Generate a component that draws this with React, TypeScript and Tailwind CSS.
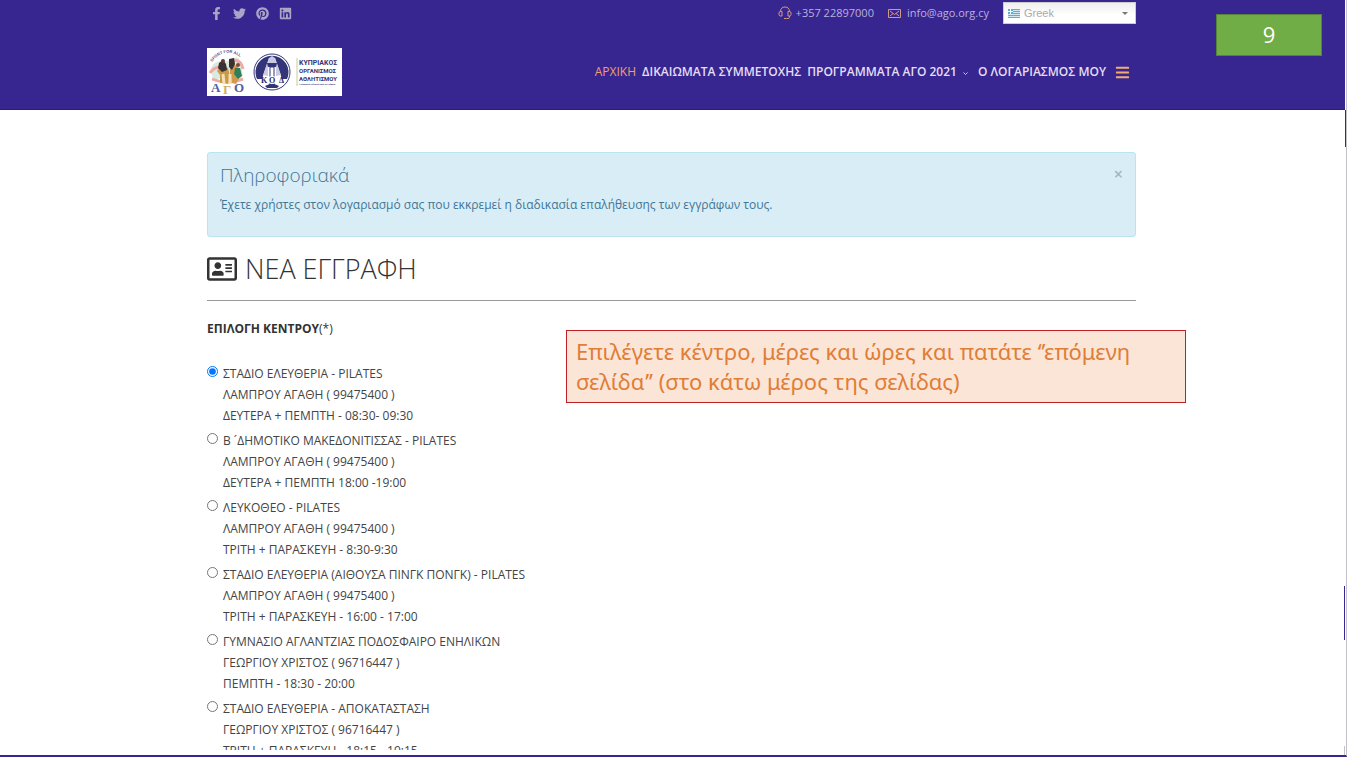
import { useState } from 'react'
import { FaBars, FaFacebookF, FaLinkedin, FaPinterest, FaRegAddressCard, FaTwitter } from 'react-icons/fa'

const centers = [
  { name: 'ΣΤΑΔΙΟ ΕΛΕΥΘΕΡΙΑ - PILATES', trainer: 'ΛΑΜΠΡΟΥ ΑΓΑΘΗ ( 99475400 )', hours: 'ΔΕΥΤΕΡΑ + ΠΕΜΠΤΗ - 08:30- 09:30' },
  { name: 'Β ´ΔΗΜΟΤΙΚΟ ΜΑΚΕΔΟΝΙΤΙΣΣΑΣ - PILATES', trainer: 'ΛΑΜΠΡΟΥ ΑΓΑΘΗ ( 99475400 )', hours: 'ΔΕΥΤΕΡΑ + ΠΕΜΠΤΗ 18:00 -19:00' },
  { name: 'ΛΕΥΚΟΘΕΟ - PILATES', trainer: 'ΛΑΜΠΡΟΥ ΑΓΑΘΗ ( 99475400 )', hours: 'ΤΡΙΤΗ + ΠΑΡΑΣΚΕΥΗ - 8:30-9:30' },
  { name: 'ΣΤΑΔΙΟ ΕΛΕΥΘΕΡΙΑ (ΑΙΘΟΥΣΑ ΠΙΝΓΚ ΠΟΝΓΚ) - PILATES', trainer: 'ΛΑΜΠΡΟΥ ΑΓΑΘΗ ( 99475400 )', hours: 'ΤΡΙΤΗ + ΠΑΡΑΣΚΕΥΗ - 16:00 - 17:00' },
  { name: 'ΓΥΜΝΑΣΙΟ ΑΓΛΑΝΤΖΙΑΣ ΠΟΔΟΣΦΑΙΡΟ ΕΝΗΛΙΚΩΝ', trainer: 'ΓΕΩΡΓΙΟΥ ΧΡΙΣΤΟΣ ( 96716447 )', hours: 'ΠΕΜΠΤΗ - 18:30 - 20:00' },
  { name: 'ΣΤΑΔΙΟ ΕΛΕΥΘΕΡΙΑ - ΑΠΟΚΑΤΑΣΤΑΣΗ', trainer: 'ΓΕΩΡΓΙΟΥ ΧΡΙΣΤΟΣ ( 96716447 )', hours: 'ΤΡΙΤΗ + ΠΑΡΑΣΚΕΥΗ - 18:15 - 19:15' },
]

const socials = [
  { label: 'Facebook', Icon: FaFacebookF },
  { label: 'Twitter', Icon: FaTwitter },
  { label: 'Pinterest', Icon: FaPinterest },
  { label: 'LinkedIn', Icon: FaLinkedin },
]

function HeadsetIcon() {
  return (
    <svg viewBox="0 0 14 14" className="h-[14px] w-[14px]" fill="none" stroke="#d79a80" strokeWidth="1">
      <path d="M2.5 5.5C2.5 2.5 4.3 1 7 1s4.500 1.500 4.500 4.500" />
      <path d="M4 5.500H2.500A1.500 1.500 0 0 0 1 7v1.500A1.500 1.500 0 0 0 2.500 10H4zM10 5.500h1.500A1.500 1.500 0 0 1 13 7v1.500a1.500 1.500 0 0 1-1.500 1.500H10z" />
      <path d="M11.500 10v1.300c0 .8-.6 1.200-1.300 1.200H8.500M6 12.500h2.500" />
    </svg>
  )
}

function MailIcon() {
  return (
    <svg viewBox="0 0 13 9" className="h-[9px] w-[13px]" fill="none" stroke="#d79a80" strokeWidth="1">
      <path d="M.5.5h12v8H.5z" />
      <path d="M2 2l4.500 3.500L11 2M2 7l3-2.500M11 7L8 4.500" />
    </svg>
  )
}

function GreekFlag() {
  return (
    <svg viewBox="0 0 12 9" className="h-[9px] w-[12px]" shapeRendering="crispEdges">
      <path d="M0 0h12v9H0z" fill="#d3e8f3" />
      <path d="M0 0h12v1H0zM0 2h12v1H0zM0 4h12v1H0zM0 6h12v1H0zM0 8h12v1H0z" fill="#64abd3" />
      <path d="M0 0h5v5H0z" fill="#64abd3" />
      <path d="M2 0h1v5H2zM0 2h5v1H0z" fill="#fff" />
    </svg>
  )
}

function Logo() {
  return (
    <svg viewBox="0 0 135 48" className="h-[48px] w-[135px]" role="img" aria-label="Κυπριακός Οργανισμός Αθλητισμού">
      <path d="M0 0h135v48H0z" fill="#fff" />
      <defs>
        <path id="logo-arc" d="M5 14Q20-5 41 15" />
      </defs>
      <path d="M4 20C10 9 17 16 23 12s9-3 11 3l2 13c-9 7-21-2-30 5z" fill="#d9ebe0" />
      <path d="M3 25c4-7 10-5 14-8M26 12c5 0 9 3 10 9M5 31c9 4 21 4 31 0" stroke="#efaaa5" strokeWidth="3" fill="none" />
      <text fontFamily="Liberation Sans, sans-serif" fontSize="4" fontWeight="700" fill="#5a4a8c">
        <textPath href="#logo-arc">SPORT FOR ALL</textPath>
      </text>
      <path d="M13 19l4-2 4 3 2 8-2 8-4-1-4 0 0-8-3-4z" fill="#c99a46" />
      <path d="M23 18l4-2 4 3 1 11-3 6-4-1-2-9z" fill="#cf9a49" />
      <path d="M12 15l4-3 3 4 1 6-5 2-4-4zM22 11l5-1 1 6-3 6-3-3z" fill="#3b3036" />
      <path d="M28 20l5 0 2 8-4 3-4-5z" fill="#347d59" />
      <circle cx="16" cy="13" r="2" fill="#5e3835" />
      <circle cx="31" cy="17" r="2" fill="#7b4a38" />
      <path d="M16 26l1 10M23 26v10" stroke="#f4dfb6" strokeWidth="3" />
      <g fontFamily="Liberation Serif, serif" fontSize="13" fontWeight="700">
        <text x="4" y="44" fill="#53609c">Α</text>
        <text x="16" y="46" fill="#d6ac5f">Γ</text>
        <text x="27" y="44" fill="#53609c">Ο</text>
      </g>
      <circle cx="65" cy="24" r="18" fill="#fff" stroke="#343478" strokeWidth="1" />
      <path d="M50 31A16.500 16.500 0 1 1 80 31L75 31 68 10h-6l-7 21z" fill="#343478" />
      <path d="M62 10l3-2 3 2 6 17-5 1V17l-4-2-4 2v11l-5-1z" fill="#c9cae3" />
      <path d="M60 15h10l-1 4h-8z" fill="#343478" />
      <path d="M63 19h4v18h-4z" fill="#fff" stroke="#343478" strokeWidth="1" />
      <path d="M58 38l7-3 7 3-2 2h-10z" fill="#343478" />
      <g fontFamily="Liberation Serif, serif" fontSize="8" fontWeight="700" fill="#292969">
        <text x="54" y="35">Κ</text>
        <text x="62" y="35" stroke="#fff" strokeWidth="2" paintOrder="stroke">Ο</text>
        <text x="72" y="35">Δ</text>
      </g>
      <path d="M90 10v28" stroke="#c8c9a0" />
      <g fontFamily="Roboto, sans-serif" fontWeight="700" fill="#343478">
        <text x="92" y="17" fontSize="7">ΚΥΠΡΙΑΚΟΣ</text>
        <text x="92" y="25" fontSize="6">ΟΡΓΑΝΙΣΜΟΣ</text>
        <text x="92" y="33" fontSize="6">ΑΘΛΗΤΙΣΜΟΥ</text>
        <text x="92" y="37" fontSize="2">Η Κυπριακή Αθλητική Αρχή της Κύπρου</text>
      </g>
    </svg>
  )
}

function Header() {
  return (
    <header className="h-[110px] border-b border-[#2b1b79] bg-[#382690] pr-[2px]">
      <div className="mx-auto max-w-[929px]">
        <div className="flex h-[26px] items-center justify-between text-[11px] text-[#b9b1dc]">
          <ul className="flex items-center gap-[10px] pl-[3px] text-[#aaa5c5]">
            {socials.map(({ label, Icon }) => (
              <li key={label}>
                <a href="#" aria-label={label} className="block">
                  <Icon size={13} />
                </a>
              </li>
            ))}
          </ul>
          <div className="flex items-center">
            <a href="tel:+35722897000" className="flex items-center gap-1">
              <HeadsetIcon />
              +357 22897000
            </a>
            <a href="mailto:info@ago.org.cy" className="ml-[14px] flex items-center gap-[6px]">
              <MailIcon />
              info@ago.org.cy
            </a>
            <div className="relative ml-[14px]">
              <select
                aria-label="Language"
                defaultValue="el"
                className="block h-[22px] w-[133px] appearance-none border border-[#ccc] bg-linear-to-b from-[#eee] to-white to-60% pl-5 font-['Liberation_Sans',sans-serif] text-[11px] text-[#aaa]"
              >
                <option value="el">Greek</option>
                <option value="en">English</option>
              </select>
              <span className="pointer-events-none absolute top-[7px] left-[5px]">
                <GreekFlag />
              </span>
              <span className="pointer-events-none absolute top-[10px] right-[8px] border-x-[3px] border-t-[3px] border-x-transparent border-t-[#777]" />
            </div>
          </div>
        </div>
        <div className="flex items-center justify-between pt-[22px]">
          <a href="#">
            <Logo />
          </a>
          <nav className="flex items-center pr-[6px] text-xs font-semibold text-[#e3def5]">
            <a href="#" className="font-normal text-[#eda06b]">ΑΡΧΙΚΗ</a>
            <a href="#" className="ml-[6px]">ΔΙΚΑΙΩΜΑΤΑ ΣΥΜΜΕΤΟΧΗΣ</a>
            <a href="#" className="ml-[6px] flex items-center gap-[6px]">
              ΠΡΟΓΡΑΜΜΑΤΑ ΑΓΟ 2021
              <svg viewBox="0 0 5 3" className="mt-[2px] h-[3px] w-[5px]" fill="none" stroke="#c9c2ea">
                <path d="M.5.5l2 2 2-2" />
              </svg>
            </a>
            <a href="#" className="ml-[10px]">Ο ΛΟΓΑΡΙΑΣΜΟΣ ΜΟΥ</a>
            <button type="button" aria-label="Menu" className="ml-[9px] text-[#f3ac70]">
              <FaBars size={15} />
            </button>
          </nav>
        </div>
      </div>
    </header>
  )
}

export default function App() {
  const [selected, setSelected] = useState(0)
  const [alertOpen, setAlertOpen] = useState(true)

  return (
    <div className="relative flex h-screen flex-col overflow-hidden border-r border-b-2 border-r-[#c3c1ca] border-b-[#382690] bg-white pr-[1px] pb-[5px] font-['Open_Sans','Noto_Sans',sans-serif] text-xs text-[#444]">
      <Header />
      <main className="min-h-0 flex-1 overflow-hidden pt-[42px] pr-[2px]">
        <div className="mx-auto max-w-[929px]">
          {alertOpen && (
            <div role="alert" className="flex h-[85px] items-start justify-between rounded-[3px] border border-[#bce4ee] bg-[#d9edf7] px-3 pt-[9px] text-[#3f7696]">
              <div>
                <h4 className="text-[19px] leading-[26px] font-light">Πληροφοριακά</h4>
                <p className="mt-[6px] leading-[21px]">
                  Έχετε χρήστες στον λογαριασμό σας που εκκρεμεί η διαδικασία επαλήθευσης των εγγράφων τους.
                </p>
              </div>
              <button type="button" aria-label="Κλείσιμο" onClick={() => setAlertOpen(false)} className="mt-[2px] text-base leading-5 font-semibold text-[#a3b5be]">
                ×
              </button>
            </div>
          )}

          <h1 className="mt-[14px] flex items-center gap-2 border-b border-[#999] pb-[14px] text-[27px] leading-[35px] font-light text-[#333]">
            <FaRegAddressCard size={30} />
            ΝΕΑ ΕΓΓΡΑΦΗ
          </h1>

          <fieldset className="mt-[17px]">
            <legend className="leading-[21px] text-[#333]">
              <span className="font-bold">ΕΠΙΛΟΓΗ ΚΕΝΤΡΟΥ</span>(*)
            </legend>
            <div className="mt-[24px] flex flex-col gap-1">
              {centers.map((center, index) => (
                <label key={center.name} className="flex items-start gap-[5px] leading-[21px]">
                  <input
                    type="radio"
                    name="center"
                    checked={selected === index}
                    onChange={() => setSelected(index)}
                    className="mt-[3px] h-[11px] w-[11px] accent-[#0075ff]"
                  />
                  <span>
                    <span className="block">{center.name}</span>
                    <span className="block">{center.trainer}</span>
                    <span className="block">{center.hours}</span>
                  </span>
                </label>
              ))}
            </div>
          </fieldset>
        </div>
      </main>

      {/* slide annotations on top of the page */}
      <div className="absolute top-[14px] right-[24px] flex h-[42px] w-[106px] items-center justify-center border border-[#568436] bg-[#70ad47] text-[22px] text-white">
        9
      </div>
      <p className="absolute top-[330px] left-[566px] w-[620px] border border-[#c02026] bg-[#fbe5d6] px-[9px] pt-[5px] pb-[6px] font-['Noto_Sans','Open_Sans',sans-serif] text-[22px] leading-[30px] text-[#e07d36]">
        Επιλέγετε κέντρο, μέρες και ώρες και πατάτε ‘’επόμενη σελίδα’’ (στο κάτω μέρος της σελίδας)
      </p>
      <div className="absolute top-[110px] right-0 h-[37px] w-px bg-[#382690]" />
      <div className="absolute top-[586px] right-[1px] h-[54px] w-px bg-[#382690]" />
      <div className="absolute right-[1px] bottom-0 h-[9px] w-px bg-[#c3c1ca]" />
    </div>
  )
}
